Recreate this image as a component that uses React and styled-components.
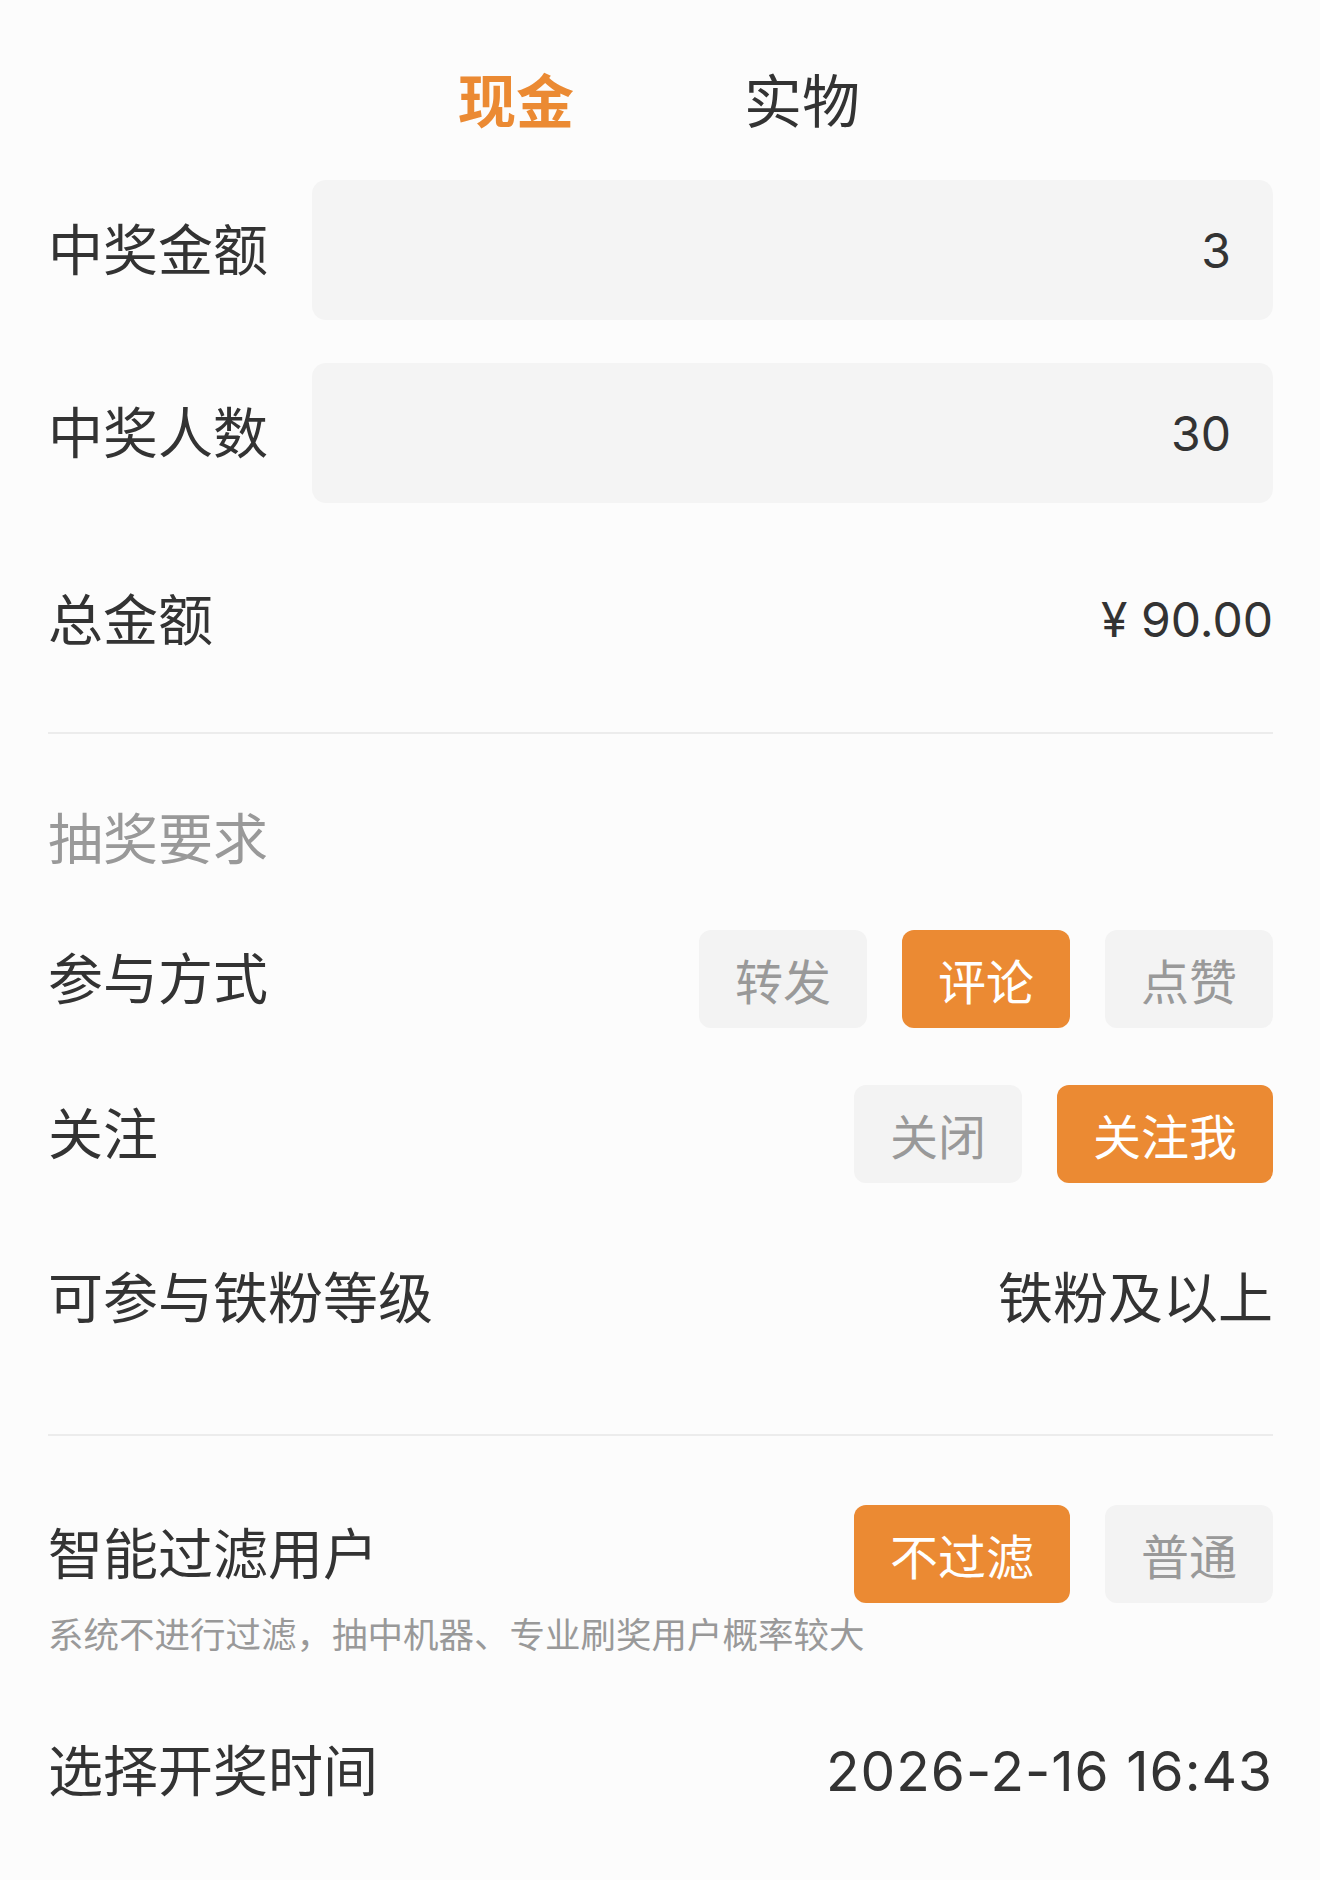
import { useState } from "react";
import styled, { createGlobalStyle } from "styled-components";

const GlobalStyle = createGlobalStyle`
    * {
        box-sizing: border-box;
        margin: 0;
        padding: 0;
    }

    body {
        background-color: #fcfcfc;
        font-family: "Inter", "Noto Sans CJK SC", sans-serif;
        color: #333333;
    }
`;

const ORANGE = "#eb8a33";

function App() {
    const [tab, setTab] = useState("现金");
    const [modo, setModo] = useState("评论");
    const [seguir, setSeguir] = useState("关注我");
    const [filtro, setFiltro] = useState("不过滤");

    return (
        <Page>
            <GlobalStyle />
            <Tabs>
                {["现金", "实物"].map((t) => (
                    <Tab key={t} ativo={t === tab} onClick={() => setTab(t)}>{t}</Tab>
                ))}
            </Tabs>

            <Row gap={0}>
                <Label>中奖金额</Label>
                <InputBox>3</InputBox>
            </Row>
            <Row gap={43}>
                <Label>中奖人数</Label>
                <InputBox>30</InputBox>
            </Row>
            <Row gap={68}>
                <Label>总金额</Label>
                <Value size={48}>¥ 90.00</Value>
            </Row>

            <Divider gap={63} />

            <SectionTitle>抽奖要求</SectionTitle>

            <Row gap={51}>
                <Label>参与方式</Label>
                <Options>
                    {["转发", "评论", "点赞"].map((o) => (
                        <Option key={o} ativo={o === modo} onClick={() => setModo(o)}>{o}</Option>
                    ))}
                </Options>
            </Row>
            <Row gap={57}>
                <Label>关注</Label>
                <Options>
                    {["关闭", "关注我"].map((o) => (
                        <Option key={o} ativo={o === seguir} onClick={() => setSeguir(o)}>{o}</Option>
                    ))}
                </Options>
            </Row>
            <Row gap={66}>
                <Label>可参与铁粉等级</Label>
                <Value>铁粉及以上</Value>
            </Row>

            <Divider gap={87} />

            <Row gap={69}>
                <Label>智能过滤用户</Label>
                <Options>
                    {["不过滤", "普通"].map((o) => (
                        <Option key={o} ativo={o === filtro} onClick={() => setFiltro(o)}>{o}</Option>
                    ))}
                </Options>
            </Row>
            <Hint>系统不进行过滤，抽中机器、专业刷奖用户概率较大</Hint>

            <Row gap={61}>
                <Label>选择开奖时间</Label>
                <Value spacing={1}>2026-2-16 16:43</Value>
            </Row>
        </Page>
    );
}

const Page = styled.div`
    width: 1320px;
    min-height: 1880px;
    padding: 0 47px 0 48px;
    background-color: #fcfcfc;
`;

const Tabs = styled.div`
    display: flex;
    justify-content: center;
    gap: 170px;
    padding-top: 60px;
    height: 180px;
    padding-right: 3px;
`;

const Tab = styled.div`
    font-size: 58px;
    line-height: 84px;
    height: 84px;
    font-weight: ${(props) => (props.ativo ? 700 : 400)};
    color: ${(props) => (props.ativo ? ORANGE : "#333333")};
    cursor: pointer;
`;

const Row = styled.div`
    display: flex;
    align-items: center;
    justify-content: space-between;
    min-height: 98px;
    margin-top: ${(props) => props.gap}px;
`;

const Label = styled.p`
    font-size: 55px;
    line-height: 80px;
    color: #333333;
    white-space: nowrap;
`;

const InputBox = styled.div`
    width: 961px;
    height: 140px;
    border-radius: 14px;
    background-color: #f4f4f4;
    display: flex;
    align-items: center;
    justify-content: flex-end;
    padding-right: 42px;
    font-size: 48px;
    color: #333333;
`;

const Value = styled.p`
    font-size: ${(props) => props.size || 55}px;
    letter-spacing: ${(props) => props.spacing || 0}px;
    line-height: 80px;
    color: #333333;
    white-space: nowrap;
`;

const Divider = styled.div`
    height: 2px;
    background-color: #ececec;
    margin-top: ${(props) => props.gap}px;
`;

const SectionTitle = styled.p`
    font-size: 55px;
    line-height: 80px;
    color: #999999;
    margin-top: 65px;
`;

const Options = styled.div`
    display: flex;
    gap: 35px;
`;

const Option = styled.div`
    height: 98px;
    padding: 0 36px;
    border-radius: 12px;
    display: flex;
    align-items: center;
    font-size: 48px;
    background-color: ${(props) => (props.ativo ? ORANGE : "#f3f3f3")};
    color: ${(props) => (props.ativo ? "#ffffff" : "#999999")};
    cursor: pointer;
`;

const Hint = styled.p`
    font-size: 35.5px;
    line-height: 50px;
    color: #999999;
    margin-top: 8px;
`;

export default App;
